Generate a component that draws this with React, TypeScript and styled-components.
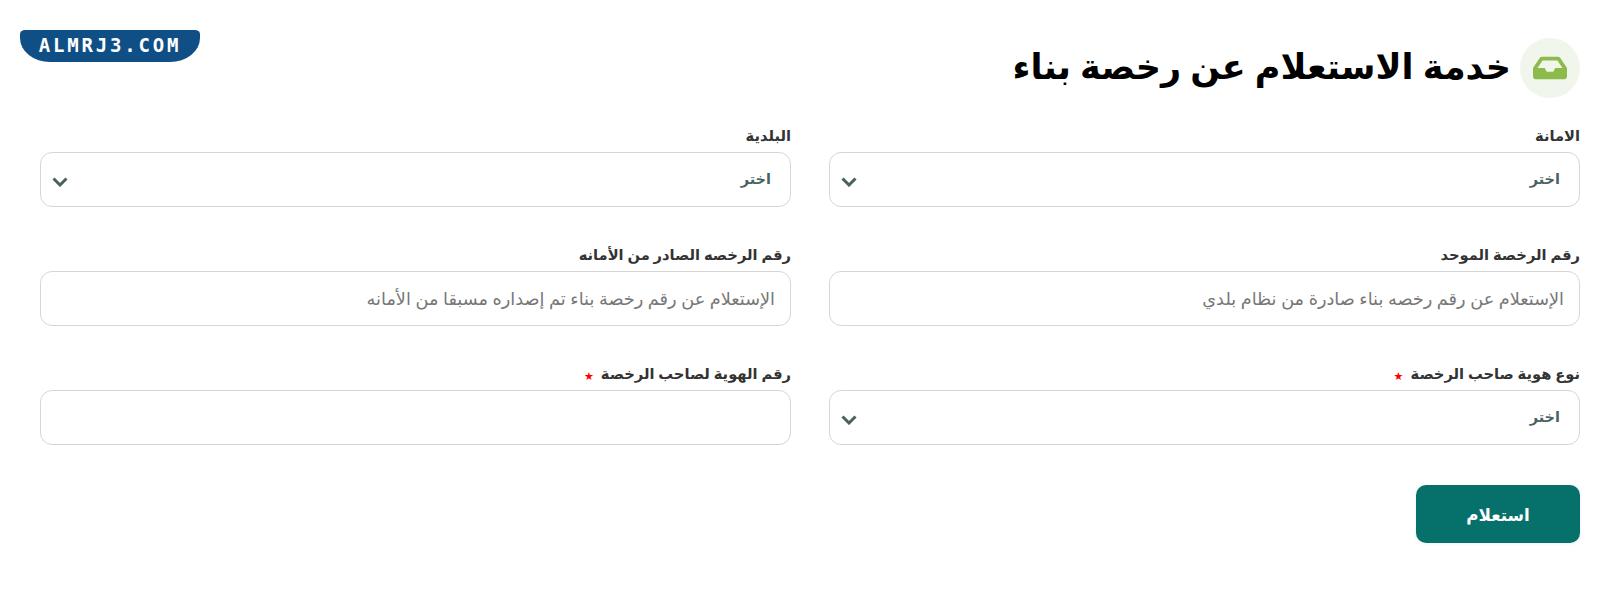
import React from "react";
import styled, { createGlobalStyle } from "styled-components";
import { FaInbox } from "react-icons/fa";

const GlobalStyle = createGlobalStyle`
  html, body {
    margin: 0;
    padding: 0;
    background: #fff;
  }
  body {
    font-family: "Noto Sans", "DejaVu Sans", sans-serif;
  }
`;

type Field = {
  label: string;
  kind: "select" | "input";
  placeholder?: string;
  required?: boolean;
};

const fields: Field[] = [
  { label: "الامانة", kind: "select" },
  { label: "البلدية", kind: "select" },
  {
    label: "رقم الرخصة الموحد",
    kind: "input",
    placeholder: "الإستعلام عن رقم رخصه بناء صادرة من نظام بلدي",
  },
  {
    label: "رقم الرخصه الصادر من الأمانه",
    kind: "input",
    placeholder: "الإستعلام عن رقم رخصة بناء تم إصداره مسبقا من الأمانه",
  },
  { label: "نوع هوية صاحب الرخصة", kind: "select", required: true },
  { label: "رقم الهوية لصاحب الرخصة", kind: "input", required: true },
];

const App = () => {
  return (
    <>
      <GlobalStyle />
      <Page dir="rtl">
        <Header>
          <TitleBlock>
            <IconCircle>
              <FaInbox />
            </IconCircle>
            <Title>خدمة الاستعلام عن رخصة بناء</Title>
          </TitleBlock>
          <Logo dir="ltr">ALMRJ3.COM</Logo>
        </Header>
        <FormGrid>
          {fields.map((field) => (
            <FieldBox key={field.label}>
              <Label>
                {field.label}
                {field.required && <Star>★</Star>}
              </Label>
              {field.kind === "select" ? (
                <SelectBox>
                  <SelectValue>اختر</SelectValue>
                  <Chevron width="16" height="10" viewBox="0 0 16 10">
                    <polyline
                      points="1.5,1.5 8,8 14.5,1.5"
                      fill="none"
                      stroke="#49625f"
                      strokeWidth="3"
                    />
                  </Chevron>
                </SelectBox>
              ) : (
                <TextInput placeholder={field.placeholder} />
              )}
            </FieldBox>
          ))}
        </FormGrid>
        <Actions>
          <SubmitButton>استعلام</SubmitButton>
        </Actions>
      </Page>
    </>
  );
};

export default App;

const Page = styled.div`
  width: 1620px;
  height: 611px;
  box-sizing: border-box;
  padding: 30px 40px 0 40px;
  overflow: hidden;
`;

const Header = styled.header`
  display: flex;
  justify-content: space-between;
  align-items: flex-start;
  height: 92px;
  margin-left: -20px;
`;

const TitleBlock = styled.div`
  display: flex;
  align-items: center;
  gap: 9px;
  margin-top: 8px;
`;

const IconCircle = styled.div`
  width: 60px;
  height: 60px;
  border-radius: 50%;
  background: #f1f6ec;
  color: #8cbb4b;
  font-size: 34px;
  display: flex;
  align-items: center;
  justify-content: center;
`;

const Title = styled.h1`
  margin: 0;
  padding-bottom: 6px;
  font-size: 35px;
  font-weight: 700;
  color: #000;
`;

const Logo = styled.div`
  width: 180px;
  height: 32px;
  box-sizing: border-box;
  padding-bottom: 2px;
  background: #104f86;
  border-radius: 5px 5px 30px 30px / 4px 4px 24px 24px;
  color: #fff;
  font-family: "DejaVu Sans Mono", monospace;
  font-size: 19px;
  font-weight: 700;
  letter-spacing: 2.8px;
  display: flex;
  align-items: center;
  justify-content: center;
`;

const FormGrid = styled.div`
  display: grid;
  grid-template-columns: 751px 751px;
  column-gap: 38px;
  row-gap: 34px;
`;

const FieldBox = styled.div`
  display: flex;
  flex-direction: column;
`;

const Label = styled.label`
  height: 30px;
  box-sizing: border-box;
  padding-bottom: 5px;
  font-size: 14.7px;
  font-weight: 700;
  color: #333;
  display: flex;
  align-items: center;
  gap: 7px;
`;

const Star = styled.span`
  padding-top: 6px;
  color: #f00;
  font-size: 11px;
`;

const SelectBox = styled.div`
  height: 55px;
  box-sizing: border-box;
  border: 1px solid #d6d6d6;
  border-radius: 12px;
  padding: 0 19px 0 11px;
  display: flex;
  align-items: center;
  justify-content: space-between;
  background: #fff;
`;

const SelectValue = styled.span`
  padding-bottom: 4px;
  font-size: 14.5px;
  font-weight: 700;
  color: #4a625f;
`;

const Chevron = styled.svg`
  margin-top: 4px;
`;

const TextInput = styled.input`
  height: 55px;
  box-sizing: border-box;
  border: 1px solid #d6d6d6;
  border-radius: 12px;
  padding: 0 15px 2px;
  font-family: inherit;
  font-size: 17.7px;
  background: #fff;
  outline: none;
  &::placeholder {
    color: #777;
    opacity: 1;
  }
`;

const Actions = styled.div`
  display: flex;
  margin-top: 40px;
`;

const SubmitButton = styled.button`
  width: 164px;
  height: 58px;
  border: none;
  border-radius: 10px;
  background: #06706b;
  color: #fff;
  font-family: inherit;
  font-size: 16.8px;
  font-weight: 700;
  box-shadow: 0 1px 4px rgba(0, 0, 0, 0.06);
`;
